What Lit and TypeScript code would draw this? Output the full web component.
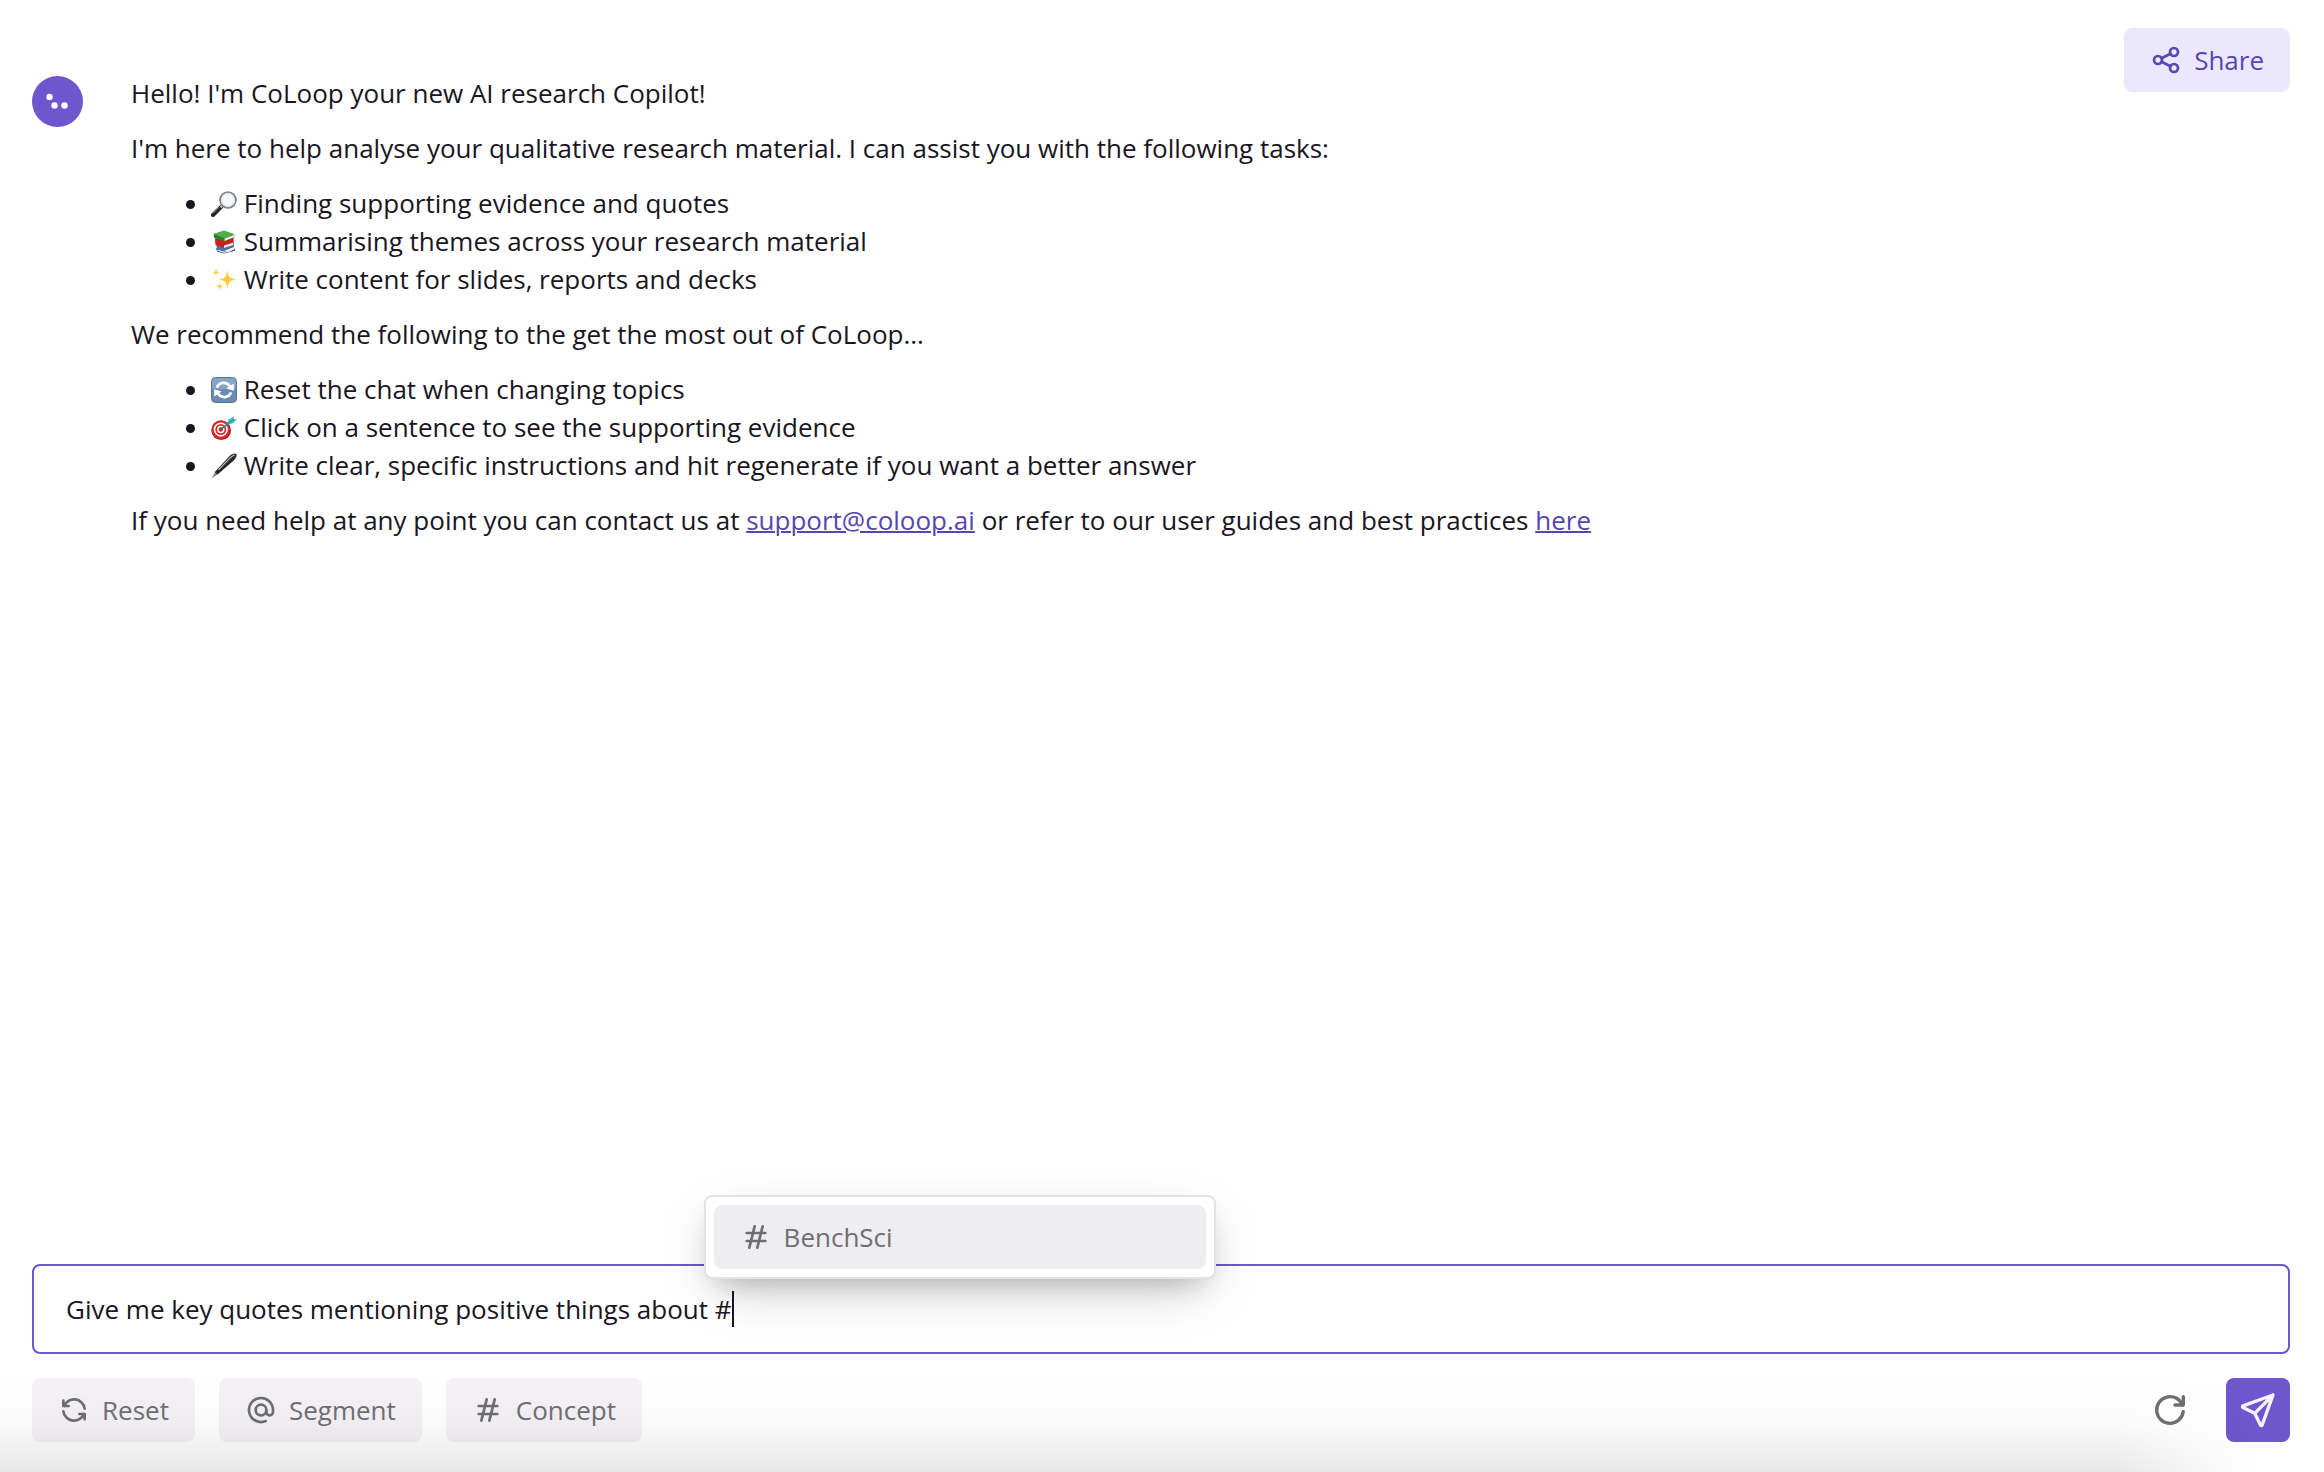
import { LitElement, html, css, svg, type TemplateResult } from "lit";
import { customElement, property, state } from "lit/decorators.js";

const ICONS: Record<string, TemplateResult> = {
  share: svg`<circle cx="6" cy="12" r="3"/><circle cx="18" cy="6" r="3"/><circle cx="18" cy="18" r="3"/><path d="M8.7 10.7l6.6-3.4M8.7 13.3l6.6 3.4"/>`,
  refresh: svg`<path d="M20 11a8.1 8.1 0 0 0-15.5-2m-.5-4v4h4"/><path d="M4 13a8.1 8.1 0 0 0 15.5 2m.5 4v-4h-4"/>`,
  at: svg`<circle cx="12" cy="12" r="4"/><path d="M16 12v1.5a2.5 2.5 0 0 0 5 0v-1.5a9 9 0 1 0-5.5 8.28"/>`,
  hash: svg`<path d="M5 9h14M5 15h14M11 4l-4 16M17 4l-4 16"/>`,
  reload: svg`<path d="M19.93 13.04a8 8 0 1 1-9.92-8.79c3.9-1 7.93 1.01 9.42 4.75"/><path d="M20 4v5h-5"/>`,
  send: svg`<path d="M10 14L21 3M21 3l-6.5 18a.55.55 0 0 1-1 0L10 14l-7-3.5a.55.55 0 0 1 0-1L21 3"/>`,
};

const EMOJI: Record<string, TemplateResult> = {
  search: svg`
    <path d="M2 24l8.400-8.400" stroke="#222428" stroke-width="4" stroke-linecap="round"/>
    <path d="M2 22.400l6.400-6.400" stroke="#85898f" stroke-width="1"/>
    <path d="M9.600 16.400l2.400-2.400" stroke="#b9bdc2" stroke-width="2.400"/>
    <circle cx="17" cy="9" r="8" fill="#eef1f4" stroke="#7b8087" stroke-width="1.600"/>
    <circle cx="17" cy="9" r="6.500" fill="#f6f7f9" stroke="#d5d9de" stroke-width="1"/>`,
  books: svg`
    <path d="M5 19l13 4 6-3.600v2.400L13 24.600 6 22.600z" fill="#33507f"/>
    <path d="M6.400 21l7 2.400 10-3.600" stroke="#e9edf3" stroke-width="1.200"/>
    <path d="M5 14l1 6 7.600 1.800L23 18v-3z" fill="#4b6ea8"/>
    <path d="M4 9.600l.4 6.200 9 3.200L22.600 15.600V9z" fill="#c9201b"/>
    <path d="M13 16.600l9-2.800v2.200l-9 3z" fill="#f2eeee"/>
    <path d="M2.600 5l.6 4L13.400 12.400l10-4.200V6L13 2z" fill="#2e7d32"/>
    <path d="M2.600 5L13 1.600 23.400 5 13.600 9.200z" fill="#4fae49"/>
    <path d="M13.600 9.600L23.400 5.800v2.200l-9.800 4z" fill="#edf2ea"/>`,
  sparkles: svg`
    <path d="M16.400 2.400c.6 7.200 2 9 8.800 10-6.800 1-8.200 3-8.800 10.400-.6-7.400-2-9.400-8.600-10.400 6.600-1 8-2.800 8.600-10z" fill="#ffc83d"/>
    <path d="M5 1c.3 3 1 4 3.600 4.500C6 6 5.300 7 5 10c-.3-3-1-4-3.600-4.500C4 5 4.700 4 5 1z" fill="#ffcf55"/>
    <path d="M8.600 14.600c.3 3.200 1 4.100 3.600 4.600-2.600.5-3.300 1.500-3.600 4.600-.3-3.100-1-4.100-3.400-4.600 2.400-.5 3.100-1.400 3.400-4.600z" fill="#ffcf55"/>`,
  cycle: svg`
    <rect x="0.500" y="0.500" width="25" height="25" rx="4" fill="#6b8bae" stroke="#587796"/>
    <path d="M1 5a4 4 0 0 1 4-4h16a4 4 0 0 1 4 4v7H1z" fill="#86a4c4"/>
    <path d="M6 10.600C8 5 15.600 4.200 19 9.400" stroke="#fff" stroke-width="2.800"/>
    <path d="M22.800 6.400v7.400l-7.400-2.400z" fill="#fff"/>
    <path d="M20 15.400c-2 5.600-9.600 6.400-13 1.200" stroke="#fff" stroke-width="2.800"/>
    <path d="M3.200 19.600v-7.400l7.400 2.400z" fill="#fff"/>`,
  target: svg`
    <circle cx="10.200" cy="15.200" r="9.800" fill="#a91616"/>
    <circle cx="9.800" cy="14.600" r="9.300" fill="#e0262a"/>
    <circle cx="9.800" cy="14.600" r="6.300" stroke="#fff" stroke-width="1.600"/>
    <circle cx="9.800" cy="14.600" r="3" stroke="#fff" stroke-width="1.500"/>
    <path d="M10.200 14.200L19 6.800" stroke="#1d7f8c" stroke-width="1.600"/>
    <path d="M15 9.800l2.600-5.200L23 1.400l-.4 2.800 3.400.4-4.400 4z" fill="#3fbccb"/>
    <path d="M15.500 9.600L23 4" stroke="#1f8793" stroke-width="1"/>`,
  pen: svg`
    <path d="M.6 25.400l3.600-6.400 2.600 2.200z" fill="#85898e"/>
    <path d="M3.600 19.200L17.600 4C20 1.600 22 .6 24 .6c1.600 0 2 1.200 1.400 2.800-.8 2-2 3.600-4.400 5.600L6.600 21.600z" fill="#26292d"/>
    <path d="M8 16.400L18.800 5.200C20.400 3.600 21.800 2.600 23.400 2" stroke="#b9bec4" stroke-width="1.200" stroke-linecap="round"/>`,
};

@customElement("ui-icon")
class UiIcon extends LitElement {
  @property() name = "hash";

  static styles = css`
    :host { display: block; flex: none; width: 32px; height: 32px; }
    .glyph {
      display: block;
      width: 100%;
      height: 100%;
      fill: none;
      stroke: currentColor;
      stroke-width: 2;
      stroke-linecap: round;
      stroke-linejoin: round;
    }
  `;

  render() {
    return html`<svg class="glyph" viewBox="0 0 24 24" aria-hidden="true">${ICONS[this.name]}</svg>`;
  }
}

@customElement("emoji-icon")
class EmojiIcon extends LitElement {
  @property() name = "search";

  static styles = css`
    :host { display: inline-block; width: 26px; height: 26px; vertical-align: -4px; line-height: 0; }
    .glyph { width: 100%; height: 100%; fill: none; }
  `;

  render() {
    return html`<svg class="glyph" viewBox="0 0 26 26" aria-hidden="true">${EMOJI[this.name]}</svg>`;
  }
}

interface Tip { icon: string; text: string }

const TASKS: Tip[] = [
  { icon: "search", text: "Finding supporting evidence and quotes" },
  { icon: "books", text: "Summarising themes across your research material" },
  { icon: "sparkles", text: "Write content for slides, reports and decks" },
];

const ADVICE: Tip[] = [
  { icon: "cycle", text: "Reset the chat when changing topics" },
  { icon: "target", text: "Click on a sentence to see the supporting evidence" },
  { icon: "pen", text: "Write clear, specific instructions and hit regenerate if you want a better answer" },
];

const TOOLS: Tip[] = [
  { icon: "refresh", text: "Reset" },
  { icon: "at", text: "Segment" },
  { icon: "hash", text: "Concept" },
];

@customElement("app-root")
class AppRoot extends LitElement {
  @state() private draft = "Give me key quotes mentioning positive things about #";

  static styles = css`
    :host {
      --ink: #1a1523;
      --muted: #6f6e77;
      --violet: #6e56cf;
      --violet-ink: #5746af;
      position: relative;
      display: flex;
      flex-direction: column;
      justify-content: space-between;
      box-sizing: border-box;
      min-height: 100vh;
      padding: 28px 34px 30px 32px;
      background: #fff;
      color: var(--ink);
      font-family: "Open Sans", "Noto Sans", sans-serif;
      font-size: 26px;
      line-height: 38px;
    }
    :host::after {
      content: "";
      position: absolute;
      inset: auto 0 0 0;
      height: 100px;
      background: linear-gradient(to bottom, rgba(0, 0, 0, 0), rgba(0, 0, 0, 0.02) 50%, rgba(0, 0, 0, 0.09));
      mask-image: linear-gradient(to right, #000 91%, transparent 97%);
      pointer-events: none;
    }
    .chat { display: flex; align-items: flex-start; }
    .avatar { flex: none; width: 51px; height: 51px; margin: 48px 48px 0 0; }
    .message {
      flex: 1;
      display: flex;
      flex-direction: column;
      gap: 17px;
      margin-top: 46px;
    }
    .para { margin: 0; }
    .list { margin: 0; padding-left: 80px; }
    .link { color: var(--violet-ink); text-decoration-thickness: 2px; }
    button { font: inherit; border: 0; margin: 0; cursor: pointer; }
    .btn {
      display: flex;
      align-items: center;
      gap: 12px;
      height: 64px;
      padding: 0 26px;
      border-radius: 8px;
      background: #f4f2f5;
      color: var(--muted);
      font-weight: 500;
    }
    .share { background: #ece8fc; color: var(--violet-ink); }
    .composer { display: flex; flex-direction: column; gap: 24px; }
    .field {
      display: flex;
      align-items: center;
      box-sizing: border-box;
      height: 90px;
      padding: 0 32px;
      border: 2px solid var(--violet);
      border-radius: 8px;
      background: #fff;
    }
    .prompt {
      field-sizing: content;
      height: 38px;
      padding: 0;
      border: 0;
      outline: 0;
      background: none;
      color: inherit;
      font: inherit;
      caret-color: transparent;
    }
    .caret { position: relative; width: 2px; height: 36px; background: var(--ink); }
    .menu {
      position: absolute;
      left: -28px;
      bottom: 48px;
      box-sizing: border-box;
      width: 512px;
      padding: 8px;
      border: 2px solid #e3e2e4;
      border-radius: 8px;
      background: #fff;
      box-shadow: 0 18px 52px -12px rgba(22, 23, 24, 0.25), 0 14px 28px -14px rgba(22, 23, 24, 0.25);
    }
    .option { width: 100%; background: #eeedef; }
    .tools { display: flex; align-items: center; gap: 24px; }
    .spacer { flex: 1; }
    .square { width: 64px; padding: 0; justify-content: center; }
    .plain { background: none; }
    .send { background: var(--violet); color: #f6f3ff; }
    .large { width: 40px; height: 40px; }
  `;

  private list(items: Tip[]) {
    return html`<ul class="list">
      ${items.map((t) => html`<li><emoji-icon name=${t.icon}></emoji-icon> ${t.text}</li>`)}
    </ul>`;
  }

  private onInput(e: Event) {
    this.draft = (e.target as HTMLInputElement).value;
  }

  render() {
    return html`
      <main class="chat">
        <svg class="avatar" viewBox="0 0 51 51" role="img" aria-label="CoLoop">
          <circle cx="25.500" cy="25.500" r="25.500" fill="#6e56cf"/>
          <g fill="#fff"><circle cx="17.500" cy="21" r="3.200"/><circle cx="22.500" cy="29.500" r="3.200"/><circle cx="32.500" cy="29.500" r="3.200"/></g>
        </svg>
        <article class="message">
          <p class="para">Hello! I'm CoLoop your new AI research Copilot!</p>
          <p class="para">I'm here to help analyse your qualitative research material. I can assist you with the following tasks:</p>
          ${this.list(TASKS)}
          <p class="para">We recommend the following to the get the most out of CoLoop...</p>
          ${this.list(ADVICE)}
          <p class="para">If you need help at any point you can contact us at <a class="link" href="mailto:support@coloop.ai">support@coloop.ai</a> or refer to our user guides and best practices <a class="link" href="#guides">here</a></p>
        </article>
        <button class="btn share" type="button"><ui-icon name="share"></ui-icon>Share</button>
      </main>
      <form class="composer" @submit=${(e: Event) => e.preventDefault()}>
        <div class="field">
          <input class="prompt" type="text" aria-label="Message" autocomplete="off" .value=${this.draft} @input=${this.onInput} />
          <div class="caret">
            <div class="menu">
              <button class="btn option" type="button"><ui-icon name="hash"></ui-icon>BenchSci</button>
            </div>
          </div>
        </div>
        <div class="tools">
          ${TOOLS.map((t) => html`<button class="btn" type="button"><ui-icon name=${t.icon}></ui-icon>${t.text}</button>`)}
          <span class="spacer"></span>
          <button class="btn square plain" type="button" aria-label="Regenerate"><ui-icon class="large" name="reload"></ui-icon></button>
          <button class="btn square send" type="submit" aria-label="Send"><ui-icon class="large" name="send"></ui-icon></button>
        </div>
      </form>
    `;
  }
}
